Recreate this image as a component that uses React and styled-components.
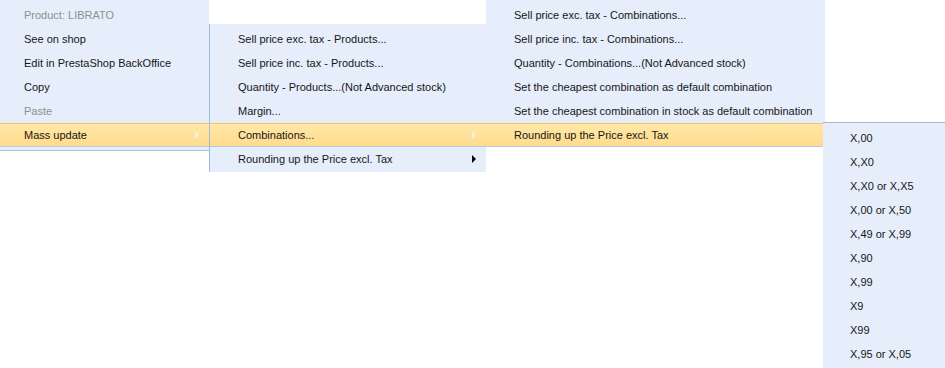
import styled, { createGlobalStyle } from "styled-components";

const GlobalStyle = createGlobalStyle`
	html, body {
		margin: 0;
		background: #ffffff;
	}
	body {
		font-family: "Liberation Sans", Arial, sans-serif;
		font-size: 11px;
		color: #1b1b1b;
	}
`;

const Stage = styled.div`
	display: flex;
	align-items: flex-start;
	width: 945px;
	height: 368px;
	overflow: hidden;
`;

const Menu = styled.div`
	flex: none;
	width: ${(p) => p.$width}px;
	margin-top: ${(p) => p.$top || 0}px;
	margin-right: ${(p) => p.$overlap ? -p.$overlap : 0}px;
	padding: 3px 0 ${(p) => p.$bottom ?? 3}px;
	background: #e6eefc;
	border-left: ${(p) => (p.$leftLine ? "1px solid #9fbadb" : "none")};
	border-top: ${(p) => (p.$topLine ? "1px solid #a3b8d2" : "none")};
	border-bottom: ${(p) => (p.$bottomLine ? "1px solid #a9c1e2" : "none")};
	border-right: ${(p) => (p.$rightLine ? "1px solid #9fbadb" : "none")};
	box-sizing: border-box;
	position: relative;
	z-index: ${(p) => p.$z || 1};
`;

const Item = styled.div`
	position: relative;
	display: flex;
	align-items: center;
	height: 24px;
	box-sizing: border-box;
	padding-left: ${(p) => p.$indent}px;
	padding-right: 10px;
	white-space: nowrap;
	color: ${(p) => (p.$disabled ? "#8e8e8e" : "#161616")};
	background: ${(p) =>
		p.$active ? "linear-gradient(#ffe8a6, #ffdb8e)" : "transparent"};
	border-top: 1px solid ${(p) => (p.$active ? "#f3c46c" : "transparent")};
	border-bottom: 1px solid ${(p) => (p.$active ? "#b3cbe9" : "transparent")};
`;

const Label = styled.span`
	flex: 1;
`;

const Arrow = styled.span`
	width: 0;
	height: 0;
	border-top: 4px solid transparent;
	border-bottom: 4px solid transparent;
	border-left: 4px solid ${(p) => (p.$light ? "#f4f1e6" : "#000000")};
`;

const menus = [
	{
		width: 209,
		top: 0,
		indent: 24,
		bottomLine: true,
		z: 2,
		items: [
			{ label: "Product: LIBRATO", disabled: true },
			{ label: "See on shop" },
			{ label: "Edit in PrestaShop BackOffice" },
			{ label: "Copy" },
			{ label: "Paste", disabled: true },
			{ label: "Mass update", active: true, sub: true },
		],
	},
	{
		width: 277,
		top: 24,
		indent: 28,
		bottom: 1,
		leftLine: true,
		items: [
			{ label: "Sell price exc. tax - Products..." },
			{ label: "Sell price inc. tax - Products..." },
			{ label: "Quantity - Products...(Not Advanced stock)" },
			{ label: "Margin..." },
			{ label: "Combinations...", active: true, sub: true },
			{ label: "Rounding up the Price excl. Tax", sub: true },
		],
	},
	{
		width: 339,
		top: 0,
		indent: 28,
		bottom: 0,
		overlap: 2,
		items: [
			{ label: "Sell price exc. tax - Combinations..." },
			{ label: "Sell price inc. tax - Combinations..." },
			{ label: "Quantity - Combinations...(Not Advanced stock)" },
			{ label: "Set the cheapest combination as default combination" },
			{ label: "Set the cheapest combination in stock as default combination" },
			{ label: "Rounding up the Price excl. Tax", active: true },
		],
	},
	{
		width: 124,
		top: 122,
		indent: 27,
		topLine: true,
		z: 3,
		items: [
			{ label: "X,00" },
			{ label: "X,X0" },
			{ label: "X,X0 or X,X5" },
			{ label: "X,00 or X,50" },
			{ label: "X,49 or X,99" },
			{ label: "X,90" },
			{ label: "X,99" },
			{ label: "X9" },
			{ label: "X99" },
			{ label: "X,95 or X,05" },
		],
	},
];

function App() {
	return (
		<>
			<GlobalStyle />
			<Stage>
				{menus.map((menu, i) => (
					<Menu
						key={i}
						$width={menu.width}
						$top={menu.top}
						$bottom={menu.bottom}
						$overlap={menu.overlap}
						$leftLine={menu.leftLine}
						$rightLine={menu.rightLine}
						$topLine={menu.topLine}
						$bottomLine={menu.bottomLine}
						$z={menu.z}
					>
						{menu.items.map((item) => (
							<Item
								key={item.label}
								$indent={menu.indent}
								$active={item.active}
								$disabled={item.disabled}
							>
								<Label>{item.label}</Label>
								{item.sub && <Arrow $light={item.active} />}
							</Item>
						))}
					</Menu>
				))}
			</Stage>
		</>
	);
}

export default App;
